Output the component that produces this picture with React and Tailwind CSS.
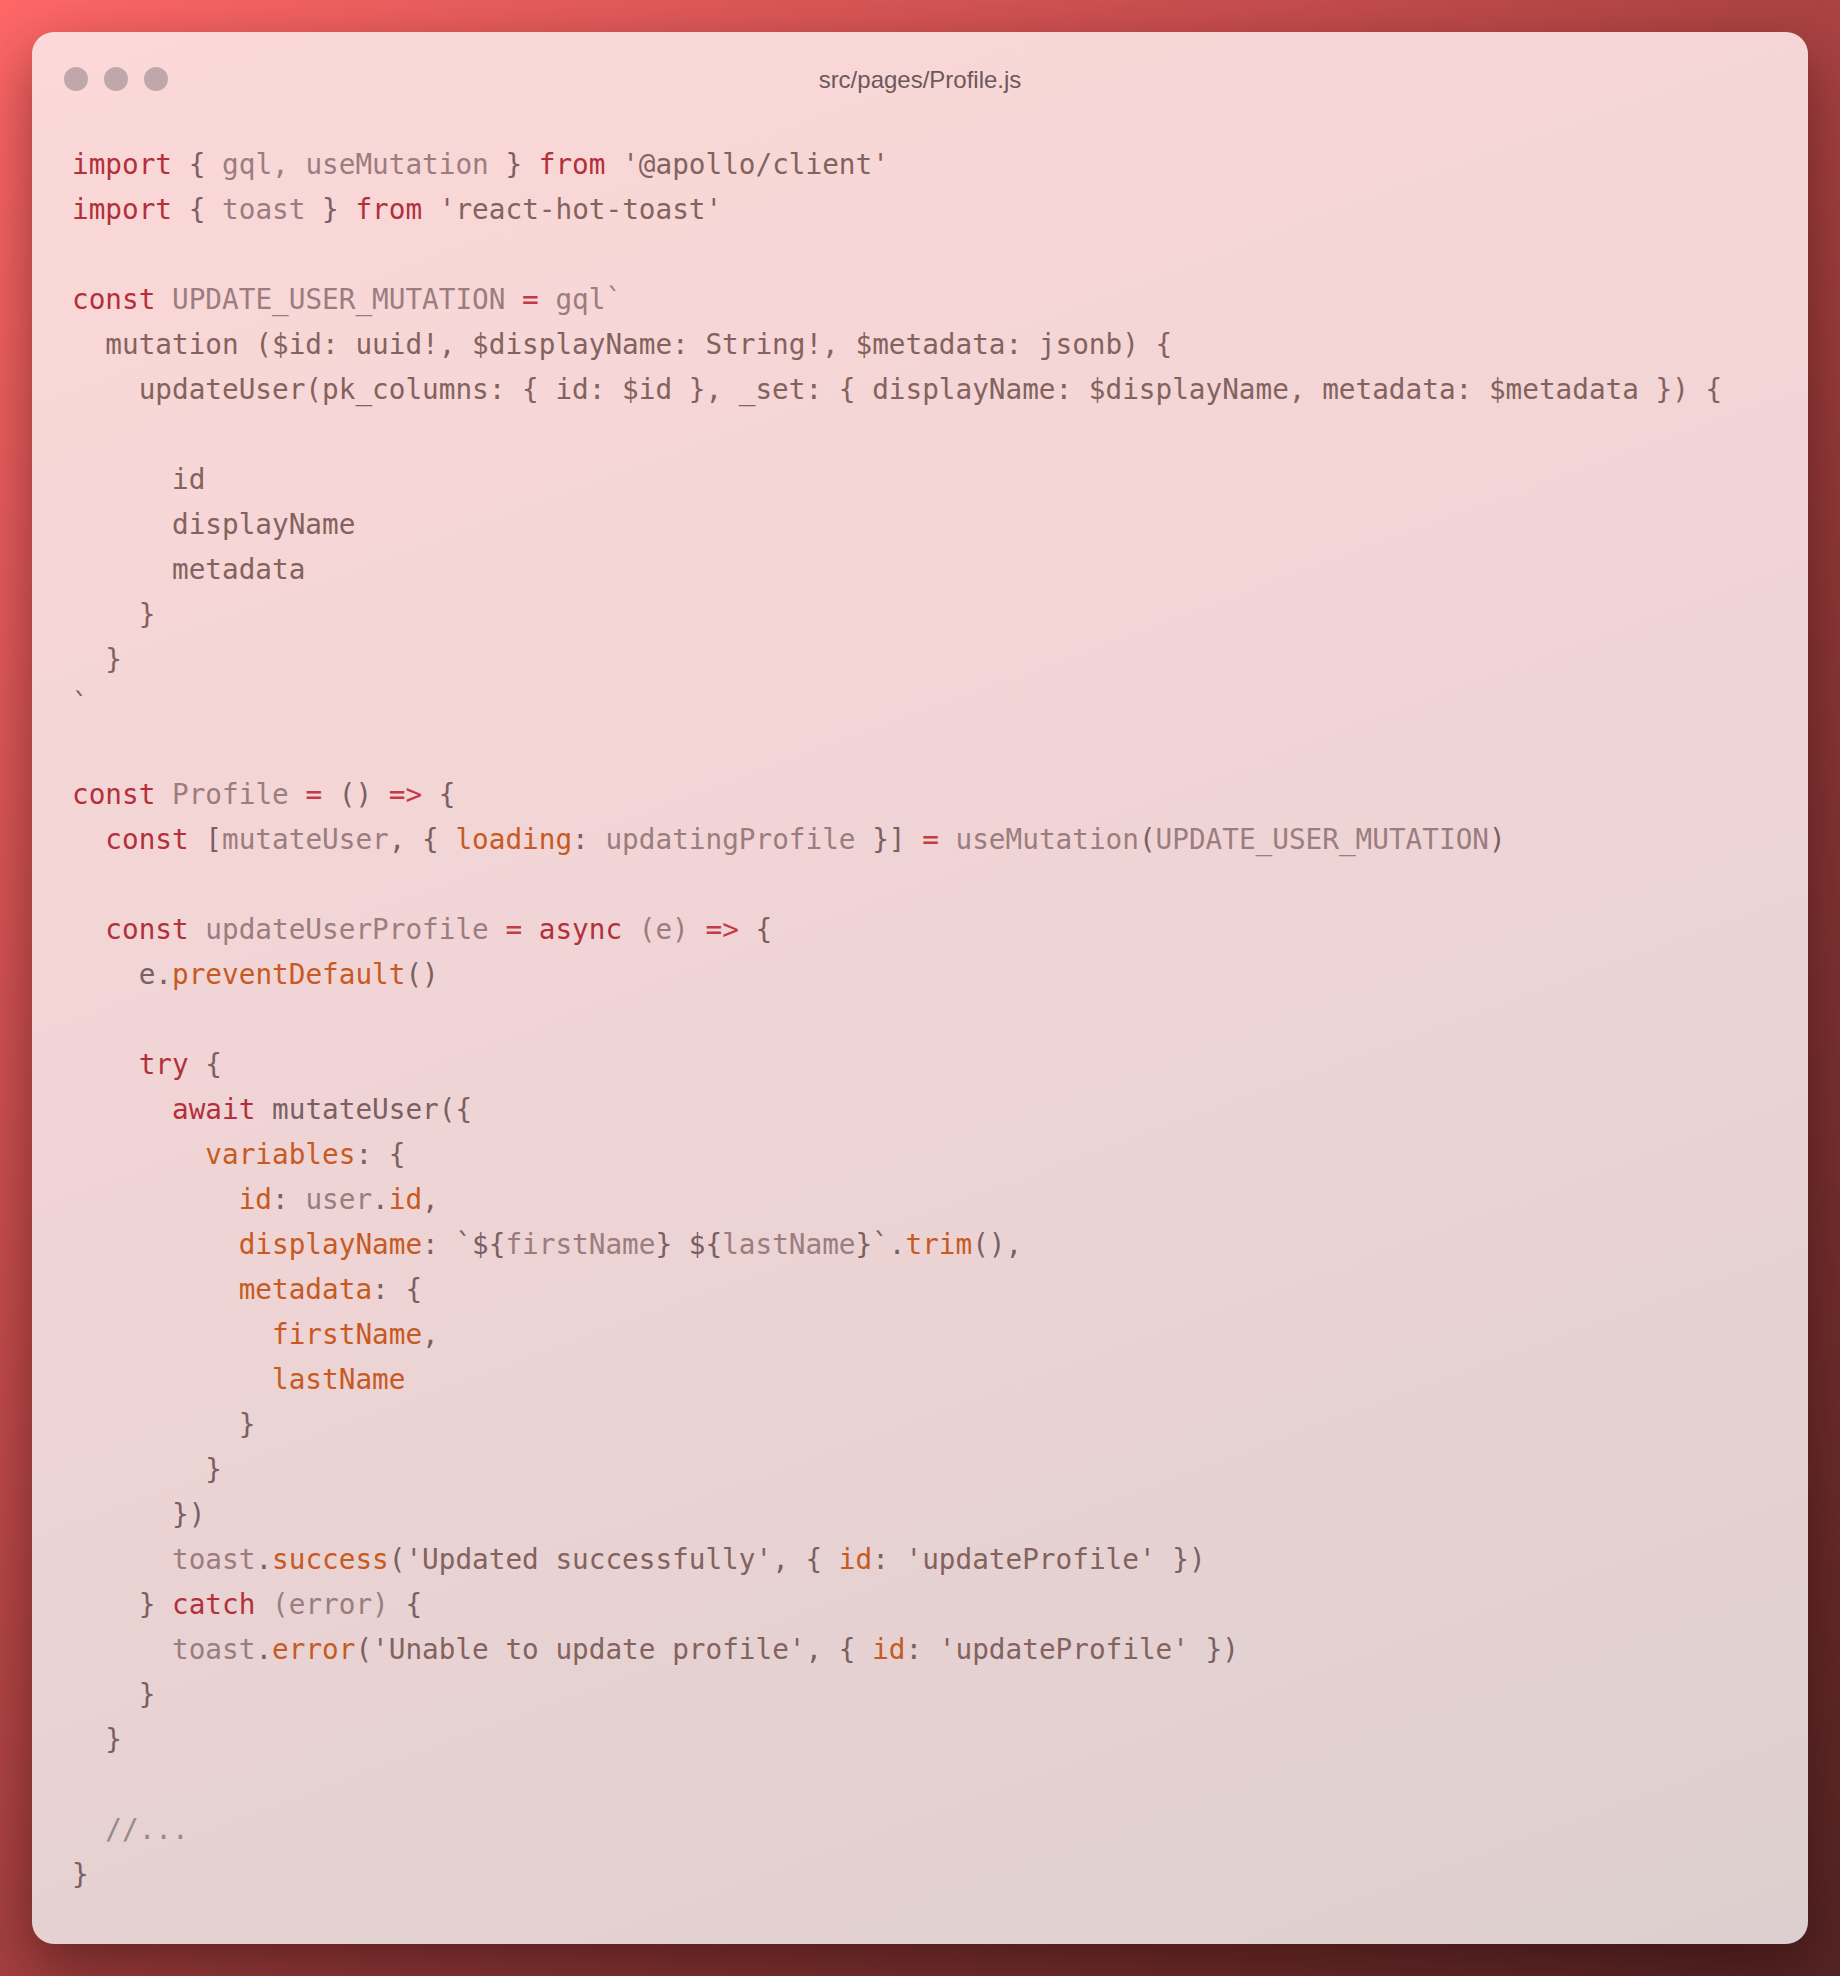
const tone = {
  k: "text-[#b3303a]",
  o: "text-[#c13c46]",
  i: "text-[#9c7d7f]",
  p: "text-[#7a6062]",
  s: "text-[#84625d]",
  r: "text-[#c75a22]",
  c: "text-[#948b8b]",
};

const lines = [
  [["k", "import"], ["p", " { "], ["i", "gql, useMutation"], ["p", " } "], ["k", "from"], ["s", " '@apollo/client'"]],
  [["k", "import"], ["p", " { "], ["i", "toast"], ["p", " } "], ["k", "from"], ["s", " 'react-hot-toast'"]],
  [],
  [["k", "const"], ["i", " UPDATE_USER_MUTATION "], ["o", "="], ["i", " gql`"]],
  [["s", "  mutation ($id: uuid!, $displayName: String!, $metadata: jsonb) {"]],
  [["s", "    updateUser(pk_columns: { id: $id }, _set: { displayName: $displayName, metadata: $metadata }) {"]],
  [],
  [["s", "      id"]],
  [["s", "      displayName"]],
  [["s", "      metadata"]],
  [["s", "    }"]],
  [["s", "  }"]],
  [["s", "`"]],
  [],
  [["k", "const"], ["i", " Profile "], ["o", "="], ["p", " () "], ["o", "=>"], ["p", " {"]],
  [["k", "  const"], ["p", " ["], ["i", "mutateUser"], ["p", ", { "], ["r", "loading"], ["p", ": "], ["i", "updatingProfile"], ["p", " }] "], ["o", "="], ["i", " useMutation"], ["p", "("], ["i", "UPDATE_USER_MUTATION"], ["p", ")"]],
  [],
  [["k", "  const"], ["i", " updateUserProfile "], ["o", "="], ["k", " async"], ["i", " (e) "], ["o", "=>"], ["p", " {"]],
  [["p", "    e."], ["r", "preventDefault"], ["p", "()"]],
  [],
  [["k", "    try"], ["p", " {"]],
  [["k", "      await"], ["p", " mutateUser({"]],
  [["r", "        variables"], ["p", ": {"]],
  [["r", "          id"], ["p", ": "], ["i", "user"], ["p", "."], ["r", "id"], ["p", ","]],
  [["r", "          displayName"], ["p", ": `${"], ["i", "firstName"], ["p", "} ${"], ["i", "lastName"], ["p", "}`."], ["r", "trim"], ["p", "(),"]],
  [["r", "          metadata"], ["p", ": {"]],
  [["r", "            firstName"], ["p", ","]],
  [["r", "            lastName"]],
  [["p", "          }"]],
  [["p", "        }"]],
  [["p", "      })"]],
  [["i", "      toast"], ["p", "."], ["r", "success"], ["p", "("], ["s", "'Updated successfully'"], ["p", ", { "], ["r", "id"], ["p", ": "], ["s", "'updateProfile'"], ["p", " })"]],
  [["p", "    } "], ["k", "catch"], ["i", " (error) "], ["p", "{"]],
  [["i", "      toast"], ["p", "."], ["r", "error"], ["p", "("], ["s", "'Unable to update profile'"], ["p", ", { "], ["r", "id"], ["p", ": "], ["s", "'updateProfile'"], ["p", " })"]],
  [["p", "    }"]],
  [["p", "  }"]],
  [],
  [["c", "  //..."]],
  [["p", "}"]],
];

function CodeLine({ parts }) {
  return (
    <div className="h-[45px] whitespace-pre">
      {parts.length === 0 ? " " : parts.map(([t, text], n) => (
        <span key={n} className={tone[t]}>{text}</span>
      ))}
    </div>
  );
}

export default function App() {
  return (
    <div className="min-h-[1976px] w-[1840px] bg-[linear-gradient(135deg,#ff6767_0%,#c44c4c_35%,#8c3636_65%,#552424_100%)] p-8">
      <div className="h-[1912px] rounded-[22px] bg-[linear-gradient(160deg,#fcd8d8_0%,#efd4d5_50%,#ddcfcf_100%)] shadow-[0_24px_60px_rgba(30,5,5,0.45)]">
        <div className="grid h-[94px] grid-cols-[1fr_auto_1fr] items-center px-8">
          <div className="flex items-center gap-4">
            <span className="h-6 w-6 rounded-full bg-[#c0a8aa]" />
            <span className="h-6 w-6 rounded-full bg-[#c0a8aa]" />
            <span className="h-6 w-6 rounded-full bg-[#c0a8aa]" />
          </div>
          <div className="pt-[2px] text-[24px] text-[#6d585a] [font-family:'Liberation_Sans',Arial,sans-serif]">
            src/pages/Profile.js
          </div>
          <div />
        </div>
        <div className="mt-4 px-10 text-[27.7px] leading-[45px] [font-family:'DejaVu_Sans_Mono','Liberation_Mono',monospace]">
          {lines.map((parts, n) => (
            <CodeLine key={n} parts={parts} />
          ))}
        </div>
      </div>
    </div>
  );
}
